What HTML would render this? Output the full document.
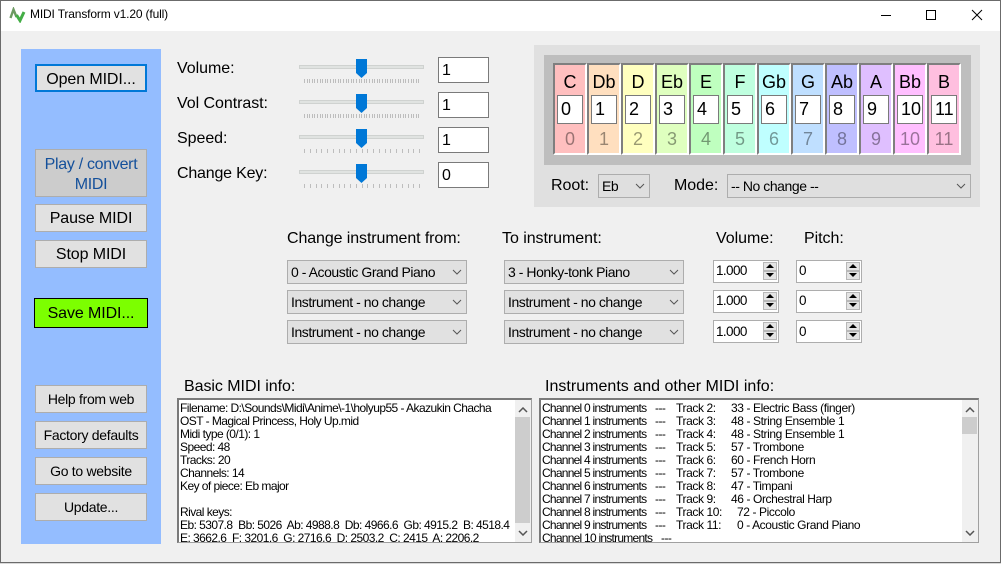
<!DOCTYPE html>
<html><head><meta charset="utf-8"><title>MIDI Transform</title>
<style>
html,body{margin:0;padding:0;width:1001px;height:564px;overflow:hidden;background:#f0f0f0}
body{position:relative;font-family:"Liberation Sans",Arial,sans-serif;color:#000}
div,span{position:absolute;box-sizing:border-box;white-space:pre}
.btn{background:#e1e1e1;border:1px solid #adadad;text-align:center;font-size:16px;left:35px;width:112px;height:28px;line-height:28px;letter-spacing:-.1px}
.sm{font-size:14px;line-height:26px;letter-spacing:-.3px}
.l{font-size:16px;line-height:20px;letter-spacing:-.05px}
.track{left:299px;width:125px;height:4px;background:#e0e3e1;border:1px solid #cfd2d0}
.t1{left:304px;width:116px;height:4px;background:linear-gradient(90deg,#bdbdbd 0 1px,transparent 1px 3px,#bdbdbd 3px 4px,transparent 4px 5px,#bdbdbd 5px 6px,transparent 6px 8px,#bdbdbd 8px 9px,transparent 9px 10px,#bdbdbd 10px 11px,transparent 11px 13px);background-size:13px 4px}
.t2{left:304px;width:116px;height:4px;background:linear-gradient(90deg,#bdbdbd 0 1px,transparent 1px 6px,#bdbdbd 6px 7px,transparent 7px 12px,#bdbdbd 12px 13px,transparent 13px 17px,#bdbdbd 17px 18px,transparent 18px 23px);background-size:23px 4px}
.tb{left:438px;width:51px;height:26px;background:#fff;border:1px solid #7a7a7a;font-size:16px;line-height:25px;padding-left:3px}
.key{top:63px;width:34px;height:92px;border:1px solid;border-width:2px 2px 2px 2px;border-color:#7f7f7f #fff #fff #7f7f7f;text-align:center}
.key .a{left:-2px;width:34px;top:7px;font-size:18px;line-height:21px}
.key .b{left:2px;top:30px;width:26px;height:29px;background:#fff;border:1px solid #7a7a7a;font-size:18px;line-height:27px;text-align:left;padding-left:3px}
.key .c{left:-2px;width:34px;top:64px;font-size:18px;line-height:21px;color:rgba(0,0,0,.4)}
.sel{background:#e1e1e1;border:1px solid #adadad;height:24px;font-size:14px;line-height:22px;padding-left:3px;letter-spacing:-.45px}
.sel svg{position:absolute;right:4px;top:8px}
.spin{width:66px;height:23px;background:#fff;border:1px solid #adadad;font-size:13.500px;line-height:19px;padding-left:2px;letter-spacing:-.6px}
.ud{right:1px;width:14px;height:9px;background:#e4e4e4;border:1px solid #b8b8b8}
.ud svg{position:absolute;left:2px;top:1px}
.memo{top:398px;height:145px;background:#fff;border:1px solid #a0a0a0;border-top:2px solid #7a7a7a;border-left:2px solid #7a7a7a;overflow:hidden}
.memo .t{left:1px;top:2px;font-size:12px;line-height:13px;letter-spacing:-.55px}
.sb{top:0;bottom:0;width:17px;background:#f0f0f0}
.th{left:0;width:15px;background:#cdcdcd}
</style></head><body>

<!-- window frame -->
<div style="left:0;top:0;width:1001px;height:31px;background:#fff"></div>
<div style="left:0;top:0;width:1001px;height:1px;background:#6b6b6b"></div>
<div style="left:0;top:0;width:1px;height:563px;background:#6b6b6b"></div>
<div style="right:0;top:0;width:1px;height:563px;background:#6b6b6b"></div>
<div style="left:0;top:562px;width:1001px;height:1px;background:#6b6b6b"></div>
<div style="left:0;top:563px;width:1001px;height:1px;background:#d8d8d8"></div>
<svg style="position:absolute;left:9px;top:7px" width="17" height="16" viewBox="0 0 17 16"><path d="M1.500 11 L4.500 2.500 L7.500 10" fill="none" stroke="#6d9a62" stroke-width="2.400"/><path d="M7.500 8 L11 13.500 L15 5" fill="none" stroke="#43ad45" stroke-width="3"/></svg>
<div style="left:30px;top:7px;font-size:12px;line-height:15px;letter-spacing:-.15px">MIDI Transform v1.20 (full)</div>
<svg style="position:absolute;left:880px;top:9px" width="105" height="14" viewBox="0 0 105 14"><path d="M1 6.500H11" stroke="#000"/><rect x="46.500" y="1.500" width="9" height="9" fill="none" stroke="#000"/><path d="M92 1L102 11M102 1L92 11" stroke="#000"/></svg>

<!-- left panel -->
<div style="left:21px;top:49px;width:140px;height:495px;background:#94bdff"></div>
<div class="btn" style="top:64px;border:2px solid #0078d7;line-height:27px">Open MIDI...</div>
<div class="btn" style="top:149px;height:48px;background:#cccccc;color:#14509b;line-height:20px;white-space:normal;padding:5px 4px 0;letter-spacing:-.3px">Play / convert MIDI</div>
<div class="btn" style="top:204px">Pause MIDI</div>
<div class="btn" style="top:240px">Stop MIDI</div>
<div class="btn" style="left:34px;width:114px;top:298px;height:30px;background:#7cff00;border:1px solid #000;line-height:29px">Save MIDI...</div>
<div class="btn sm" style="top:385px">Help from web</div>
<div class="btn sm" style="top:421px">Factory defaults</div>
<div class="btn sm" style="top:457px">Go to website</div>
<div class="btn sm" style="top:493px">Update...</div>

<!-- sliders -->
<div class="l" style="left:177px;top:59px">Volume:</div>
<div class="l" style="left:177px;top:94px">Vol Contrast:</div>
<div class="l" style="left:177px;top:129px">Speed:</div>
<div class="l" style="left:177px;top:164px;letter-spacing:-.2px">Change Key:</div>

<div class="track" style="top:65px"></div>
<div class="track" style="top:100px"></div>
<div class="track" style="top:135px"></div>
<div class="track" style="top:170px"></div>
<div class="t1" style="top:79px"></div>
<div class="t1" style="top:114px"></div>
<div class="t2" style="top:149px"></div>
<div class="t2" style="top:184px"></div>
<svg style="position:absolute;left:356px;top:59px" width="11" height="19"><path d="M0 0H11V14L5.500 19L0 14Z" fill="#0078d7"/></svg>
<svg style="position:absolute;left:356px;top:94px" width="11" height="19"><path d="M0 0H11V14L5.500 19L0 14Z" fill="#0078d7"/></svg>
<svg style="position:absolute;left:356px;top:129px" width="11" height="19"><path d="M0 0H11V14L5.500 19L0 14Z" fill="#0078d7"/></svg>
<svg style="position:absolute;left:356px;top:164px" width="11" height="19"><path d="M0 0H11V14L5.500 19L0 14Z" fill="#0078d7"/></svg>
<div class="tb" style="top:57px">1</div>
<div class="tb" style="top:92px">1</div>
<div class="tb" style="top:127px">1</div>
<div class="tb" style="top:162px">0</div>

<!-- key panel -->
<div style="left:534px;top:45px;width:446px;height:162px;background:#e0e0e0"></div>
<div style="left:544px;top:55px;width:427px;height:110px;background:#bebebe"></div>
<div class="key" style="left:553px;background:#ffbfbf"><div class="a">C</div><div class="b">0</div><div class="c">0</div></div>
<div class="key" style="left:587px;background:#ffdfbf"><div class="a">Db</div><div class="b">1</div><div class="c">1</div></div>
<div class="key" style="left:621px;background:#ffffbf"><div class="a">D</div><div class="b">2</div><div class="c">2</div></div>
<div class="key" style="left:655px;background:#dfffbf"><div class="a">Eb</div><div class="b">3</div><div class="c">3</div></div>
<div class="key" style="left:689px;background:#bfffbf"><div class="a">E</div><div class="b">4</div><div class="c">4</div></div>
<div class="key" style="left:723px;background:#bfffdf"><div class="a">F</div><div class="b">5</div><div class="c">5</div></div>
<div class="key" style="left:757px;background:#bfffff"><div class="a">Gb</div><div class="b">6</div><div class="c">6</div></div>
<div class="key" style="left:791px;background:#bfdfff"><div class="a">G</div><div class="b">7</div><div class="c">7</div></div>
<div class="key" style="left:825px;background:#bfbfff"><div class="a">Ab</div><div class="b">8</div><div class="c">8</div></div>
<div class="key" style="left:859px;background:#dfbfff"><div class="a">A</div><div class="b">9</div><div class="c">9</div></div>
<div class="key" style="left:893px;background:#ffbfff"><div class="a">Bb</div><div class="b">10</div><div class="c">10</div></div>
<div class="key" style="left:927px;background:#ffbfdf"><div class="a">B</div><div class="b">11</div><div class="c">11</div></div>

<div class="l" style="left:551px;top:176px">Root:</div>
<div class="sel" style="left:598px;top:174px;width:52px;background:#dfdfdf">Eb<svg width="10" height="6"><path d="M1 1L5 5L9 1" fill="none" stroke="#555"/></svg></div>
<div class="l" style="left:674px;top:176px">Mode:</div>
<div class="sel" style="left:727px;top:174px;width:244px;background:#dfdfdf">-- No change --<svg width="10" height="6"><path d="M1 1L5 5L9 1" fill="none" stroke="#555"/></svg></div>

<!-- instruments -->
<div class="l" style="left:287px;top:229px;letter-spacing:-.1px">Change instrument from:</div>
<div class="l" style="left:502px;top:229px">To instrument:</div>
<div class="l" style="left:716px;top:229px">Volume:</div>
<div class="l" style="left:804px;top:229px">Pitch:</div>

<div class="sel" style="left:287px;top:260px;width:180px">0 - Acoustic Grand Piano<svg width="10" height="6"><path d="M1 1L5 5L9 1" fill="none" stroke="#555"/></svg></div>
<div class="sel" style="left:287px;top:290px;width:180px">Instrument - no change<svg width="10" height="6"><path d="M1 1L5 5L9 1" fill="none" stroke="#555"/></svg></div>
<div class="sel" style="left:287px;top:320px;width:180px">Instrument - no change<svg width="10" height="6"><path d="M1 1L5 5L9 1" fill="none" stroke="#555"/></svg></div>
<div class="sel" style="left:504px;top:260px;width:180px">3 - Honky-tonk Piano<svg width="10" height="6"><path d="M1 1L5 5L9 1" fill="none" stroke="#555"/></svg></div>
<div class="sel" style="left:504px;top:290px;width:180px">Instrument - no change<svg width="10" height="6"><path d="M1 1L5 5L9 1" fill="none" stroke="#555"/></svg></div>
<div class="sel" style="left:504px;top:320px;width:180px">Instrument - no change<svg width="10" height="6"><path d="M1 1L5 5L9 1" fill="none" stroke="#555"/></svg></div>

<div class="spin" style="left:713px;top:260px">1.000<div class="ud" style="top:1px"><svg width="8" height="5"><path d="M0 4H8L4 0Z" fill="#000"/></svg></div><div class="ud" style="top:10px"><svg width="8" height="5"><path d="M0 0H8L4 4Z" fill="#000"/></svg></div></div>
<div class="spin" style="left:713px;top:290px">1.000<div class="ud" style="top:1px"><svg width="8" height="5"><path d="M0 4H8L4 0Z" fill="#000"/></svg></div><div class="ud" style="top:10px"><svg width="8" height="5"><path d="M0 0H8L4 4Z" fill="#000"/></svg></div></div>
<div class="spin" style="left:713px;top:320px;line-height:21px">1.000<div class="ud" style="top:1px"><svg width="8" height="5"><path d="M0 4H8L4 0Z" fill="#000"/></svg></div><div class="ud" style="top:10px"><svg width="8" height="5"><path d="M0 0H8L4 4Z" fill="#000"/></svg></div></div>
<div class="spin" style="left:796px;top:260px">0<div class="ud" style="top:1px"><svg width="8" height="5"><path d="M0 4H8L4 0Z" fill="#000"/></svg></div><div class="ud" style="top:10px"><svg width="8" height="5"><path d="M0 0H8L4 4Z" fill="#000"/></svg></div></div>
<div class="spin" style="left:796px;top:290px">0<div class="ud" style="top:1px"><svg width="8" height="5"><path d="M0 4H8L4 0Z" fill="#000"/></svg></div><div class="ud" style="top:10px"><svg width="8" height="5"><path d="M0 0H8L4 4Z" fill="#000"/></svg></div></div>
<div class="spin" style="left:796px;top:320px;line-height:21px">0<div class="ud" style="top:1px"><svg width="8" height="5"><path d="M0 4H8L4 0Z" fill="#000"/></svg></div><div class="ud" style="top:10px"><svg width="8" height="5"><path d="M0 0H8L4 4Z" fill="#000"/></svg></div></div>

<!-- memos -->
<div class="l" style="left:184px;top:377px">Basic MIDI info:</div>
<div class="l" style="left:545px;top:377px;letter-spacing:.02px">Instruments and other MIDI info:</div>

<div class="memo" style="left:177px;width:355px"><div class="t">Filename: D:\Sounds\Midi\Anime\-1\holyup55 - Akazukin Chacha
OST - Magical Princess, Holy Up.mid
Midi type (0/1): 1
Speed: 48
Tracks: 20
Channels: 14
Key of piece: Eb major

Rival keys:
Eb: 5307.8  Bb: 5026  Ab: 4988.8  Db: 4966.6  Gb: 4915.2  B: 4518.4
E: 3662.6  F: 3201.6  G: 2716.6  D: 2503.2  C: 2415  A: 2206.2</div>
<div class="sb" style="left:336px"><div class="th" style="top:17px;height:106px"></div>
<svg style="position:absolute;left:3px;top:7px" width="10" height="6"><path d="M1 5L5 1L9 5" fill="none" stroke="#555" stroke-width="1.500"/></svg>
<svg style="position:absolute;left:3px;top:130px" width="10" height="6"><path d="M1 1L5 5L9 1" fill="none" stroke="#555" stroke-width="1.500"/></svg></div></div>

<div class="memo" style="left:539px;width:440px">
<div class="t" style="letter-spacing:-.75px">Channel 0 instruments
Channel 1 instruments
Channel 2 instruments
Channel 3 instruments
Channel 4 instruments
Channel 5 instruments
Channel 6 instruments
Channel 7 instruments
Channel 8 instruments
Channel 9 instruments
Channel 10 instruments</div>
<div class="t" style="left:114px">---
---
---
---
---
---
---
---
---
---</div>
<div class="t" style="left:120px;top:132px">---</div>
<div class="t" style="left:135px;letter-spacing:-.4px">Track 2:
Track 3:
Track 4:
Track 5:
Track 6:
Track 7:
Track 8:
Track 9:
Track 10:
Track 11:</div>
<div class="t" style="left:190px;letter-spacing:-.4px">33 - Electric Bass (finger)
48 - String Ensemble 1
48 - String Ensemble 1
57 - Trombone
60 - French Horn
57 - Trombone
47 - Timpani
46 - Orchestral Harp</div>
<div class="t" style="left:196px;top:106px;letter-spacing:-.4px">72 - Piccolo</div>
<div class="t" style="left:196px;top:119px;letter-spacing:-.4px">0 - Acoustic Grand Piano</div>
<div class="sb" style="left:421px"><div class="th" style="top:17px;height:17px"></div>
<svg style="position:absolute;left:3px;top:7px" width="10" height="6"><path d="M1 5L5 1L9 5" fill="none" stroke="#555" stroke-width="1.500"/></svg>
<svg style="position:absolute;left:3px;top:130px" width="10" height="6"><path d="M1 1L5 5L9 1" fill="none" stroke="#555" stroke-width="1.500"/></svg></div></div>
</body></html>
